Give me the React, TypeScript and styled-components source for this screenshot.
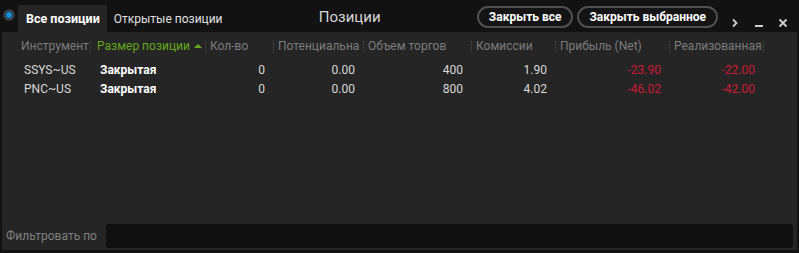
import React from "react";
import styled, { createGlobalStyle } from "styled-components";

const GlobalStyle = createGlobalStyle`
  html, body {
    margin: 0;
    padding: 0;
    background: #121212;
  }
  * {
    box-sizing: border-box;
  }
`;

const FONT = `Roboto, "Noto Sans", "Liberation Sans", sans-serif`;

const COLUMNS = "73px 115px 68px 90px 108px 84px 114px 94px";

type Row = {
  symbol: string;
  status: string;
  qty: string;
  potential: string;
  volume: string;
  fees: string;
  profit: string;
  realized: string;
};

const rows: Row[] = [
  {
    symbol: "SSYS~US",
    status: "Закрытая",
    qty: "0",
    potential: "0.00",
    volume: "400",
    fees: "1.90",
    profit: "-23.90",
    realized: "-22.00",
  },
  {
    symbol: "PNC~US",
    status: "Закрытая",
    qty: "0",
    potential: "0.00",
    volume: "800",
    fees: "4.02",
    profit: "-46.02",
    realized: "-42.00",
  },
];

const headers = [
  "Инструмент",
  "Размер позиции",
  "Кол-во",
  "Потенциальна",
  "Объем торгов",
  "Комиссии",
  "Прибыль (Net)",
  "Реализованная",
];

const Window = styled.div`
  width: 799px;
  height: 253px;
  display: flex;
  flex-direction: column;
  background: #121212;
  font-family: ${FONT};
  overflow: hidden;
`;

const TitleBar = styled.div`
  height: 32px;
  display: flex;
  align-items: flex-end;
  padding-left: 5px;
`;

const StatusDot = styled.span`
  width: 8px;
  height: 8px;
  border-radius: 50%;
  background: #1e8fd6;
  border: 1px solid #0b3550;
  box-shadow: 0 0 0 1.5px #4a4a4a;
  align-self: center;
  margin: 0 5px 2px 0;
`;

const Tabs = styled.div`
  display: flex;
  align-items: flex-end;
  height: 27px;
`;

const Tab = styled.div<{ $active?: boolean }>`
  height: 27px;
  display: flex;
  align-items: center;
  padding: ${(p) => (p.$active ? "0 7px 0 8px" : "0 0 0 7px")};
  background: ${(p) => (p.$active ? "#252525" : "transparent")};
  color: ${(p) => (p.$active ? "#ffffff" : "#e0e0e0")};
  font-size: ${(p) => (p.$active ? "12.5px" : "12px")};
  font-weight: ${(p) => (p.$active ? 700 : 400)};
  white-space: nowrap;
`;

const Title = styled.div`
  flex: 1;
  align-self: center;
  text-align: center;
  color: #d6d6d6;
  font-size: 15px;
  margin-top: 1px;
`;

const Actions = styled.div`
  display: flex;
  align-items: center;
  align-self: center;
  gap: 4px;
  margin-top: 1px;
`;

const PillButton = styled.button`
  height: 22px;
  padding: 0 10px;
  border-radius: 11px;
  border: 2px solid #505050;
  background: #141414;
  color: #ffffff;
  font-family: ${FONT};
  font-size: 12px;
  font-weight: 700;
  line-height: 18px;
  white-space: nowrap;
`;

const WindowIcons = styled.div`
  display: flex;
  align-items: center;
  gap: 6px;
  margin: 0 7px 0 8px;
`;

const IconButton = styled.span`
  width: 18px;
  height: 18px;
  display: flex;
  align-items: center;
  justify-content: center;
  color: #cfcfcf;
`;

const Panel = styled.div`
  flex: 1;
  display: flex;
  flex-direction: column;
  background: #252525;
  margin: 0 2px 3px 2px;
  padding: 0 0 2px 16px;
`;

const Grid = styled.div`
  display: grid;
  grid-template-columns: ${COLUMNS};
`;

const HeaderRow = styled(Grid)`
  height: 28px;
  align-items: center;
`;

const HeaderCell = styled.div<{ $sorted?: boolean; $first?: boolean }>`
  display: flex;
  align-items: center;
  min-width: 0;
  padding-left: ${(p) => (p.$sorted ? "6px" : p.$first ? "3px" : "4px")};
  font-size: 12px;
  color: ${(p) => (p.$sorted ? "#66a81f" : "#7c7c7c")};
`;

const HeaderLabel = styled.span`
  flex: 1;
  min-width: 0;
  overflow: hidden;
  white-space: nowrap;
  display: flex;
  align-items: center;
  gap: 4px;
`;

const SortArrow = styled.span`
  width: 0;
  height: 0;
  border-left: 4px solid transparent;
  border-right: 4px solid transparent;
  border-bottom: 4px solid #66a81f;
  margin-bottom: 1px;
`;

const Sep = styled.span`
  flex: none;
  width: 1px;
  height: 11px;
  margin-left: 1px;
  border-left: 1px dotted #4e4e4e;
`;

const DataRow = styled(Grid)`
  height: 19px;
  align-items: center;
`;

const Cell = styled.div<{ $num?: boolean; $bold?: boolean; $neg?: boolean }>`
  min-width: 0;
  white-space: nowrap;
  overflow: hidden;
  font-size: 12px;
  text-align: ${(p) => (p.$num ? "right" : "left")};
  padding: ${(p) => (p.$num ? "0 9px 0 0" : p.$bold ? "0 0 0 9px" : "0 0 0 6px")};
  font-weight: ${(p) => (p.$bold ? 700 : 400)};
  color: ${(p) => (p.$neg ? "#cc1a33" : p.$bold ? "#ffffff" : "#d8d8d8")};
`;

const Spacer = styled.div`
  flex: 1;
`;

const FilterBar = styled.div`
  display: flex;
  align-items: center;
  margin-left: -16px;
  padding: 0 4px 0 4px;
  gap: 9px;
`;

const FilterLabel = styled.span`
  font-size: 12px;
  color: #808080;
  white-space: nowrap;
`;

const FilterInput = styled.input`
  flex: 1;
  height: 24px;
  border: none;
  border-radius: 3px;
  background: #0f0f0f;
  outline: none;
  color: #ddd;
`;

export default function App() {
  return (
    <>
      <GlobalStyle />
      <Window>
        <TitleBar>
          <StatusDot />
          <Tabs>
            <Tab $active>Все позиции</Tab>
            <Tab>Открытые позиции</Tab>
          </Tabs>
          <Title>Позиции</Title>
          <Actions>
            <PillButton>Закрыть все</PillButton>
            <PillButton>Закрыть выбранное</PillButton>
          </Actions>
          <WindowIcons>
            <IconButton>
              <svg width="8" height="10" viewBox="0 0 8 10">
                <path d="M2 1.5 L5.5 5 L2 8.5" fill="none" stroke="currentColor" strokeWidth="1.8" />
              </svg>
            </IconButton>
            <IconButton>
              <svg width="10" height="10" viewBox="0 0 10 10">
                <rect x="1" y="7" width="8" height="2" fill="currentColor" />
              </svg>
            </IconButton>
            <IconButton>
              <svg width="10" height="10" viewBox="0 0 10 10">
                <path d="M1.5 1.5 L8.5 8.5 M8.5 1.5 L1.5 8.5" stroke="currentColor" strokeWidth="1.8" />
              </svg>
            </IconButton>
          </WindowIcons>
        </TitleBar>
        <Panel>
          <HeaderRow>
            {headers.map((h, i) => (
              <HeaderCell key={h} $sorted={i === 1} $first={i === 0}>
                <HeaderLabel>
                  {h}
                  {i === 1 && <SortArrow />}
                </HeaderLabel>
                <Sep />
              </HeaderCell>
            ))}
          </HeaderRow>
          {rows.map((r) => (
            <DataRow key={r.symbol}>
              <Cell>{r.symbol}</Cell>
              <Cell $bold>{r.status}</Cell>
              <Cell $num>{r.qty}</Cell>
              <Cell $num>{r.potential}</Cell>
              <Cell $num>{r.volume}</Cell>
              <Cell $num>{r.fees}</Cell>
              <Cell $num $neg>{r.profit}</Cell>
              <Cell $num $neg>{r.realized}</Cell>
            </DataRow>
          ))}
          <Spacer />
          <FilterBar>
            <FilterLabel>Фильтровать по</FilterLabel>
            <FilterInput />
          </FilterBar>
        </Panel>
      </Window>
    </>
  );
}
